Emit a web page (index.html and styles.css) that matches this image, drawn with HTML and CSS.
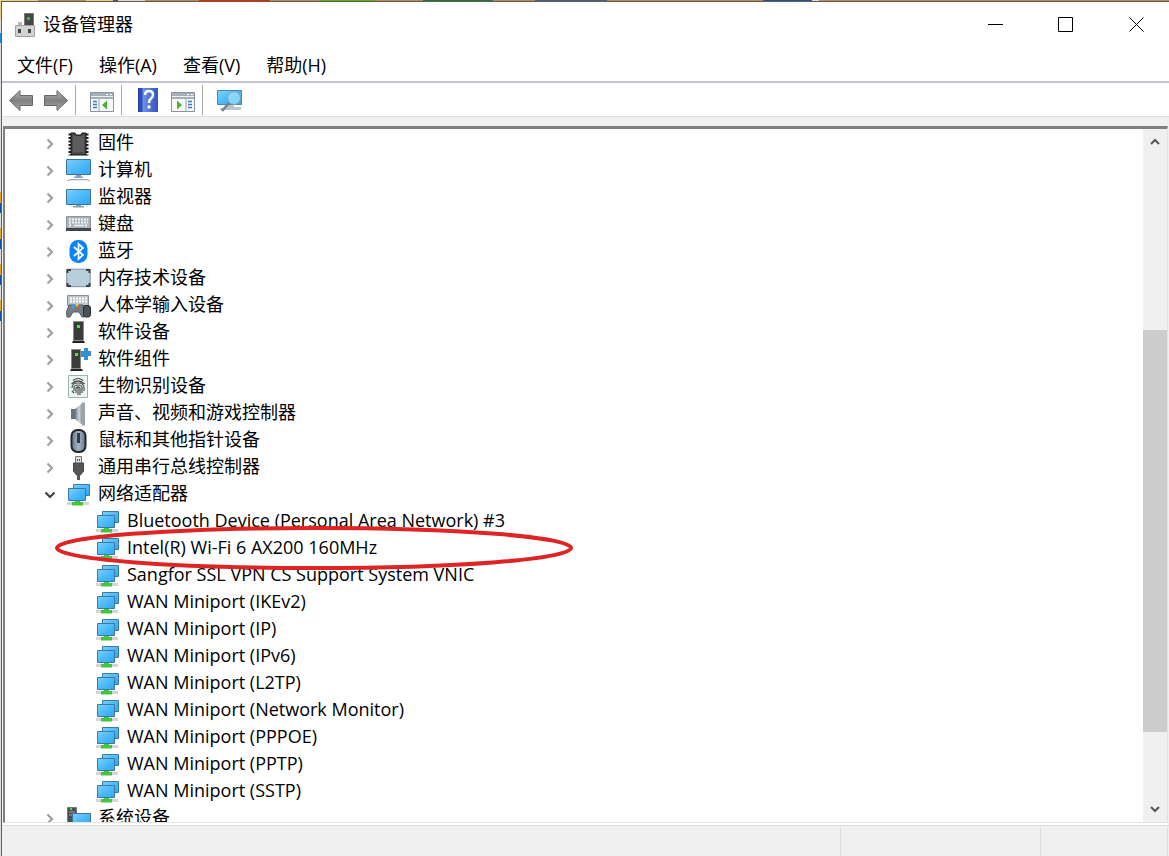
FILE: index.html
```html
<!DOCTYPE html>
<html lang="zh-CN">
<head>
    <meta charset="UTF-8">
    <meta name="viewport" content="width=device-width, initial-scale=1.0">
    <title>设备管理器</title>
    <link rel="stylesheet" href="styles.css">
</head>
<body>
    <!-- Icon set -->
    <svg class="icon-defs" aria-hidden="true">
        <defs>
            <linearGradient id="screen" x1="0" y1="0" x2="1" y2="1">
                <stop offset="0" stop-color="#7fd0fb"/>
                <stop offset="0.5" stop-color="#4dbaf9"/>
                <stop offset="1" stop-color="#2fa6f4"/>
            </linearGradient>
            <linearGradient id="arrow" x1="0" y1="0" x2="0" y2="1">
                <stop offset="0" stop-color="#b4b4b4"/>
                <stop offset="0.5" stop-color="#808080"/>
                <stop offset="1" stop-color="#a8a8a8"/>
            </linearGradient>
            <linearGradient id="steel" x1="0" y1="0" x2="1" y2="0">
                <stop offset="0" stop-color="#697580"/>
                <stop offset="0.5" stop-color="#cdd5dc"/>
                <stop offset="1" stop-color="#7d8790"/>
            </linearGradient>
            <linearGradient id="mouse" x1="0" y1="0" x2="1" y2="0">
                <stop offset="0" stop-color="#66798c"/>
                <stop offset="0.5" stop-color="#a3b4c5"/>
                <stop offset="1" stop-color="#66798c"/>
            </linearGradient>
            <linearGradient id="help" x1="0" y1="0" x2="1" y2="0">
                <stop offset="0" stop-color="#2445ad"/>
                <stop offset="0.2" stop-color="#2c50bd"/>
                <stop offset="0.25" stop-color="#6f90ea"/>
                <stop offset="1" stop-color="#3153bd"/>
            </linearGradient>
        </defs>
        <symbol id="i-chevron" viewBox="0 0 12 12">
            <path d="M3.500 1.500L8 6l-4.500 4.500" fill="none" stroke="#a0a0a0" stroke-width="2.200"/>
        </symbol>
        <symbol id="i-down" viewBox="0 0 12 12">
            <path d="M1.500 3.500l4.500 4.500 4.500-4.500" fill="none" stroke="#404040" stroke-width="2.200"/>
        </symbol>
        <symbol id="i-firmware" viewBox="0 0 25 24">
            <path d="M4 1.500v22M21 1.500v22" stroke="#222" stroke-width="3" stroke-dasharray="2 1.500"/>
            <path d="M5 1h4l1 2h5l1-2h4v22H5z" fill="#4b4b4b" stroke="#111"/>
            <path d="M7 4h11v16H7z" fill="#5c5c5c"/>
        </symbol>
        <symbol id="i-computer" viewBox="0 0 25 24">
            <path d="M.5.5h24v15H.5z" fill="url(#screen)" stroke="#3a7499"/>
            <path d="M10 16h5v1.500h2V19H8v-1.500h2z" fill="#8ba0ad"/>
            <path d="M1 22l3-1.500h17L24 22" fill="#e5eaee" stroke="#9eabb8"/>
        </symbol>
        <symbol id="i-monitor" viewBox="0 0 25 24">
            <path d="M.5 3.500h24v15H.5z" fill="url(#screen)" stroke="#3a7499"/>
            <path d="M10 19h5v1h3v1.500H7V20h3z" fill="#8ba0ad"/>
        </symbol>
        <symbol id="i-keyboard" viewBox="0 0 25 24">
            <path d="M.5 3.500h24v12H.5z" fill="#adb4bb" stroke="#8a929a"/>
            <path d="M0 15h25v3H0z" fill="#3f464d"/>
            <path d="M3 6.500h19M3 9.500h19M3 12.500h3M19 12.500h3" stroke="#f2f5f7" stroke-width="2" stroke-dasharray="2 1"/>
            <path d="M8 12.500h10" stroke="#f2f5f7" stroke-width="1.500"/>
        </symbol>
        <symbol id="i-bluetooth" viewBox="0 0 25 24">
            <rect x="3.500" y="0" width="18" height="23" rx="8.500" fill="#0a84fa"/>
            <path d="M8 7l9 8-4.500 4V4l4.500 4-9 8" fill="none" stroke="#fff" stroke-width="1.700"/>
        </symbol>
        <symbol id="i-memory" viewBox="0 0 25 24">
            <rect x=".7" y="2.200" width="23.500" height="17.500" rx="1.500" fill="#b9cedb" stroke="#83919c"/>
            <path d="M1.500 6V3H5M20 3h3.500v3M23.500 16v3H20M5 19H1.500v-3" fill="none" stroke="#3c4248" stroke-width="2"/>
        </symbol>
        <symbol id="i-hid" viewBox="0 0 25 24">
            <path d="M1.500 1.500h21v10h-21z" fill="#c0c5ca" stroke="#8a9197"/>
            <path d="M4 4.500h17M4 7.500h17" stroke="#fff" stroke-width="2" stroke-dasharray="2 1"/>
            <path d="M3 11h14l2 7-1 5h-2l-3-5H7l-3 5H1l-.5-5z" fill="#747c84" stroke="#555d64"/>
            <circle cx="7" cy="12.500" r="2" fill="#35a1eb"/>
            <circle cx="12" cy="14" r="1.500" fill="#e34f3d"/>
            <circle cx="11" cy="11" r="1.500" fill="#f3c83d"/>
            <rect x="17.500" y="11.500" width="7" height="11.500" rx="2.500" fill="#4b5258" stroke="#25292c"/>
        </symbol>
        <symbol id="i-device" viewBox="0 0 25 24">
            <path d="M7.500.5h10v19h-10z" fill="#3b3b3b" stroke="#8b8b8b"/>
            <path d="M7 20h11l1 2H6z" fill="#222"/>
            <path d="M11 4h3v3h-3z" fill="#43ea35"/>
        </symbol>
        <symbol id="i-component" viewBox="0 0 25 24">
            <path d="M14 3h4V0h4v3h3v5h-3v4h-4V9h-4z" fill="#338fd3"/>
            <path d="M5.500 1.500h9v19h-9z" fill="#3b3b3b" stroke="#8b8b8b"/>
            <path d="M5 21h11l1 2H4z" fill="#222"/>
            <path d="M9 5h3v3H9z" fill="#43ea35"/>
        </symbol>
        <symbol id="i-finger" viewBox="0 0 25 24">
            <path d="M2.500.5h19v22h-19z" fill="#eef4f2" stroke="#97b5ab"/>
            <g fill="none" stroke="#44504d" stroke-width="1.200">
                <path d="M7 5.500q5-4 10 0M5.500 9q6.500-6 13 0M6 13q0-5 6-5t6 5v3M8 16v-3q0-3 4-3t4 3v5M10 18v-5q2-2 4 0v7M12 13v7M6 16l2 2"/>
            </g>
        </symbol>
        <symbol id="i-sound" viewBox="0 0 25 24">
            <path d="M5 7h4v10H5z" fill="#66727d"/>
            <path d="M9 7l8-6.500v23L9 17z" fill="url(#steel)"/>
            <path d="M16 .5h3v23h-3z" fill="#9aa3ab"/>
        </symbol>
        <symbol id="i-mouse" viewBox="0 0 25 24">
            <rect x="5.500" y="1" width="14" height="22" rx="6" fill="url(#mouse)" stroke="#20262c" stroke-width="2"/>
            <path d="M12.500 4v10" stroke="#343c45" stroke-width="3"/>
        </symbol>
        <symbol id="i-usb" viewBox="0 0 25 24">
            <path d="M9.500.5h6v7h-6z" fill="#dedede" stroke="#777"/>
            <path d="M11 3h1v2h-1zM13 3h1v2h-1z" fill="#555"/>
            <path d="M7.500 7h10v8l-3 4h-4l-3-4z" fill="#555" stroke="#444"/>
            <path d="M11 18h3v6h-3z" fill="#555"/>
        </symbol>
        <symbol id="i-network" viewBox="0 0 25 24">
            <path d="M7.500 1.500h16v11h-16z" fill="url(#screen)" stroke="#3a7ba5"/>
            <path d="M2.500 5.500h17v12h-17z" fill="url(#screen)" stroke="#3a7ba5"/>
            <path d="M1 19h22v3H1z" fill="#d5d5d5"/>
            <path d="M9 18h5v1h3v3.500H6V19h3z" fill="#45c63a"/>
        </symbol>
        <symbol id="i-system" viewBox="0 0 25 24">
            <path d="M1.500.5h9v19h-9z" fill="#4a4f53" stroke="#777"/>
            <path d="M3 5h6M3 8h4" stroke="#9ea4a8"/>
            <path d="M4 1h2v2H4z" fill="#43ea35"/>
            <path d="M6.500 6.500h18v13h-18z" fill="url(#screen)" stroke="#3a7499"/>
        </symbol>
    </svg>

    <div class="window">
        <header class="titlebar">
            <svg class="app-icon" viewBox="0 0 20 24" aria-hidden="true">
                <path d="M9.500.5h9v13h-9z" fill="#464646" stroke="#777"/>
                <path d="M12 4h3v3h-3z" fill="#3fb838"/>
                <path d="M3 9h4v4H3z" fill="#b6b6b6"/>
                <path d="M.5 12.500h19v11H.5z" fill="#d3d3d3" stroke="#a2a2a2"/>
                <path d="M3 16h3v4H3zM13 16h3v4h-3z" fill="#444"/>
            </svg>
            <h1>设备管理器</h1>
            <div class="window-buttons">
                <button type="button" aria-label="最小化"><svg viewBox="0 0 16 16"><path d="M0 7.500h15" stroke="#000"/></svg></button>
                <button type="button" aria-label="最大化"><svg viewBox="0 0 16 16"><path d="M.5.5h14v14H.5z" fill="none" stroke="#000"/></svg></button>
                <button type="button" aria-label="关闭"><svg viewBox="0 0 16 16"><path d="M1.500.5l14 14M15.500.5l-14 14" stroke="#000"/></svg></button>
            </div>
        </header>

        <nav class="menubar">
            <button type="button">文件(F)</button>
            <button type="button">操作(A)</button>
            <button type="button">查看(V)</button>
            <button type="button">帮助(H)</button>
        </nav>

        <div class="toolbar">
            <button type="button" aria-label="后退"><svg viewBox="0 0 26 24"><path d="M1.500 12.500L12 2.500V7.500h12.500v10H12v5z" fill="url(#arrow)" stroke="#666"/></svg></button>
            <button type="button" aria-label="前进"><svg viewBox="0 0 26 24"><path d="M24.500 12.500L14 2.500V7.500H1.500v10H14v5z" fill="url(#arrow)" stroke="#666"/></svg></button>
            <span class="divider"></span>
            <button type="button" aria-label="显示控制台树">
                <svg viewBox="0 0 26 24">
                    <path d="M1.500 4.500h23v19h-23z" fill="#f6f8fa" stroke="#8a949e"/>
                    <path d="M2 5h22v6H2z" fill="#a4afb9"/>
                    <path d="M2 8.500h22" stroke="#eef1f4"/>
                    <path d="M17 6.500h2M21 6.500h2" stroke="#fff"/>
                    <path d="M10 11v12" stroke="#9aa5af"/>
                    <path d="M4 13.500h4M4 16.500h4M4 19.500h4" stroke="#3b7bbb" stroke-width="1.500"/>
                    <path d="M18 12.500v9L13 17z" fill="#46b52d"/>
                </svg>
            </button>
            <span class="divider"></span>
            <button type="button" aria-label="帮助">
                <svg viewBox="0 0 26 24">
                    <path d="M3 0h20v24H3z" fill="url(#help)"/>
                    <path d="M10 7q0-4 4-4t4 4q0 2-2 3.500t-2 4.500" fill="none" stroke="#fff" stroke-width="2.500"/>
                    <circle cx="14" cy="19" r="1.700" fill="#fff"/>
                </svg>
            </button>
            <button type="button" aria-label="显示操作窗格">
                <svg viewBox="0 0 26 24">
                    <path d="M1.500 4.500h23v19h-23z" fill="#f6f8fa" stroke="#8a949e"/>
                    <path d="M2 5h22v6H2z" fill="#a4afb9"/>
                    <path d="M2 8.500h22" stroke="#eef1f4"/>
                    <path d="M17 6.500h2M21 6.500h2" stroke="#fff"/>
                    <path d="M16 11v12" stroke="#9aa5af"/>
                    <path d="M18 13.500h4M18 16.500h4M18 19.500h4" stroke="#3b7bbb" stroke-width="1.500"/>
                    <path d="M7 12.500v9l5-4.500z" fill="#46b52d"/>
                </svg>
            </button>
            <span class="divider"></span>
            <button type="button" aria-label="扫描检测硬件改动">
                <svg viewBox="0 0 26 24">
                    <path d="M1.500 2.500h24v14h-24z" fill="url(#screen)" stroke="#4189b5"/>
                    <path d="M10 17h8v2h7v3H4v-2h6z" fill="#b9c4cd"/>
                    <circle cx="18" cy="10" r="6.500" fill="#9bdcfb" fill-opacity=".8" stroke="#7b9fb3"/>
                    <path d="M13 15l-7 8" stroke="#76828b" stroke-width="2.500"/>
                </svg>
            </button>
        </div>

        <main class="panel">
            <ul class="tree">
                <li><div class="row"><button type="button" aria-label="展开"><svg><use href="#i-chevron"/></svg></button><svg class="icon"><use href="#i-firmware"/></svg>固件</div></li>
                <li><div class="row"><button type="button" aria-label="展开"><svg><use href="#i-chevron"/></svg></button><svg class="icon"><use href="#i-computer"/></svg>计算机</div></li>
                <li><div class="row"><button type="button" aria-label="展开"><svg><use href="#i-chevron"/></svg></button><svg class="icon"><use href="#i-monitor"/></svg>监视器</div></li>
                <li><div class="row"><button type="button" aria-label="展开"><svg><use href="#i-chevron"/></svg></button><svg class="icon"><use href="#i-keyboard"/></svg>键盘</div></li>
                <li><div class="row"><button type="button" aria-label="展开"><svg><use href="#i-chevron"/></svg></button><svg class="icon"><use href="#i-bluetooth"/></svg>蓝牙</div></li>
                <li><div class="row"><button type="button" aria-label="展开"><svg><use href="#i-chevron"/></svg></button><svg class="icon"><use href="#i-memory"/></svg>内存技术设备</div></li>
                <li><div class="row"><button type="button" aria-label="展开"><svg><use href="#i-chevron"/></svg></button><svg class="icon"><use href="#i-hid"/></svg>人体学输入设备</div></li>
                <li><div class="row"><button type="button" aria-label="展开"><svg><use href="#i-chevron"/></svg></button><svg class="icon"><use href="#i-device"/></svg>软件设备</div></li>
                <li><div class="row"><button type="button" aria-label="展开"><svg><use href="#i-chevron"/></svg></button><svg class="icon"><use href="#i-component"/></svg>软件组件</div></li>
                <li><div class="row"><button type="button" aria-label="展开"><svg><use href="#i-chevron"/></svg></button><svg class="icon"><use href="#i-finger"/></svg>生物识别设备</div></li>
                <li><div class="row"><button type="button" aria-label="展开"><svg><use href="#i-chevron"/></svg></button><svg class="icon"><use href="#i-sound"/></svg>声音、视频和游戏控制器</div></li>
                <li><div class="row"><button type="button" aria-label="展开"><svg><use href="#i-chevron"/></svg></button><svg class="icon"><use href="#i-mouse"/></svg>鼠标和其他指针设备</div></li>
                <li><div class="row"><button type="button" aria-label="展开"><svg><use href="#i-chevron"/></svg></button><svg class="icon"><use href="#i-usb"/></svg>通用串行总线控制器</div></li>
                <li>
                    <div class="row"><button type="button" aria-label="折叠"><svg><use href="#i-down"/></svg></button><svg class="icon"><use href="#i-network"/></svg>网络适配器</div>
                    <ul class="children">
                        <li class="row"><svg class="icon"><use href="#i-network"/></svg>Bluetooth Device (Personal Area Network) #3</li>
                        <li class="row marked"><svg class="icon"><use href="#i-network"/></svg>Intel(R) Wi-Fi 6 AX200 160MHz
                            <svg class="mark" viewBox="0 0 518 44" aria-hidden="true"><ellipse cx="259" cy="22" rx="257" ry="20" fill="none" stroke="#df2424" stroke-width="4"/></svg>
                        </li>
                        <li class="row"><svg class="icon"><use href="#i-network"/></svg>Sangfor SSL VPN CS Support System VNIC</li>
                        <li class="row"><svg class="icon"><use href="#i-network"/></svg>WAN Miniport (IKEv2)</li>
                        <li class="row"><svg class="icon"><use href="#i-network"/></svg>WAN Miniport (IP)</li>
                        <li class="row"><svg class="icon"><use href="#i-network"/></svg>WAN Miniport (IPv6)</li>
                        <li class="row"><svg class="icon"><use href="#i-network"/></svg>WAN Miniport (L2TP)</li>
                        <li class="row"><svg class="icon"><use href="#i-network"/></svg>WAN Miniport (Network Monitor)</li>
                        <li class="row"><svg class="icon"><use href="#i-network"/></svg>WAN Miniport (PPPOE)</li>
                        <li class="row"><svg class="icon"><use href="#i-network"/></svg>WAN Miniport (PPTP)</li>
                        <li class="row"><svg class="icon"><use href="#i-network"/></svg>WAN Miniport (SSTP)</li>
                    </ul>
                </li>
                <li><div class="row"><button type="button" aria-label="展开"><svg><use href="#i-chevron"/></svg></button><svg class="icon"><use href="#i-system"/></svg>系统设备</div></li>
            </ul>
            <div class="scrollbar">
                <button type="button" aria-label="向上滚动"><svg viewBox="0 0 12 12"><path d="M2 8l4-4 4 4" fill="none" stroke="#555" stroke-width="2"/></svg></button>
                <div class="track"><div class="thumb"></div></div>
                <button type="button" aria-label="向下滚动"><svg viewBox="0 0 12 12"><path d="M2 4l4 4 4-4" fill="none" stroke="#555" stroke-width="2"/></svg></button>
            </div>
        </main>

        <footer class="statusbar">
            <span></span>
            <span></span>
            <span></span>
        </footer>
    </div>
</body>
</html>
```
FILE: styles.css
```css
* {
    box-sizing: border-box;
}
body {
    margin: 0;
    height: 100vh;
    padding: 1px 0 0 1px;
    overflow: hidden;
    font-family: "Open Sans", "Noto Sans CJK SC", sans-serif;
    font-size: 18px;
    color: #000;
    /* slivers of the desktop behind the window */
    background:
        linear-gradient(90deg, #e8cf8c 0 38px, #b38d63 38px 86px, #e8cf8c 86px 113px, #2c5a9c 113px 118px, #d8d8d8 118px 145px, #b38d63 145px 199px, #d92a10 199px 270px, #b38d63 270px 319px, #5cae1c 319px 376px, #b38d63 376px 423px, #107c41 423px 493px, #b38d63 493px 535px, #3f5f9c 535px 607px, #b38d63 607px 763px, #1c55a5 763px 812px, #ddd 812px 819px, #b38d63 819px) 0 0 / 100% 1px no-repeat,
        linear-gradient(#e8cf8c 0 20px, #ddd 20px 33px, #1d84d8 33px 43px, #ddd 43px 192px, #e3a32b 192px 203px, #0b52a8 203px 213px, #ddd 213px 228px, #e3a32b 228px 239px, #0b52a8 239px 249px, #ddd 249px 264px, #e3a32b 264px 275px, #0b52a8 275px 285px, #ddd 285px 300px, #e3a32b 300px 311px, #0b52a8 311px 321px, #ddd 321px) 0 0 / 1px 100% no-repeat;
}
button {
    padding: 0;
    border: 0;
    background: none;
    font: inherit;
    color: inherit;
}
ul {
    margin: 0;
    padding: 0;
    list-style: none;
}
svg {
    display: block;
}
.icon-defs {
    position: absolute;
    width: 0;
    height: 0;
}
.window {
    display: flex;
    flex-direction: column;
    height: 100%;
    border-top: 1px solid #6e5a44;
    border-left: 1px solid #606060;
    background: #f0f0f0;
}

/* Title and menu */
.titlebar {
    display: flex;
    align-items: center;
    height: 45px;
    padding-left: 13px;
    background: #fff;
}
.app-icon {
    width: 20px;
    height: 24px;
    margin-right: 8px;
}
.titlebar h1 {
    margin: 0;
    padding-bottom: 4px;
    font-size: 18px;
    font-weight: normal;
}
.window-buttons {
    display: flex;
    gap: 4px;
    margin-left: auto;
}
.window-buttons button {
    display: grid;
    place-items: center;
    width: 66px;
    height: 44px;
}
.window-buttons svg {
    width: 16px;
    height: 16px;
}
.menubar {
    display: flex;
    gap: 26px;
    height: 36px;
    padding-left: 15px;
    border-bottom: 2px solid #c4c4cc;
    background: #fff;
}

/* Toolbar */
.toolbar {
    display: flex;
    align-items: center;
    gap: 9px;
    height: 34px;
    padding: 1px 0 0 6px;
    border-bottom: 1px solid #e0e0e0;
    background: #fff;
}
.toolbar svg {
    width: 26px;
    height: 24px;
}
.divider {
    width: 1px;
    height: 30px;
    margin: 0 4px 0 -3px;
    background: #a8a8a8;
}

/* Device tree */
.panel {
    display: flex;
    flex: 1;
    min-height: 0;
    margin: 9px 1px 0 1px;
    overflow: hidden;
    border: 2px solid #808080;
    border-top-width: 3px;
    border-right: 1px solid #e3e3e3;
    border-bottom: 1px solid #e3e3e3;
    background: #fff;
    box-shadow: 0 2px 0 #fff;
}
.tree {
    flex: 1;
    padding-top: 1px;
}
.row {
    display: flex;
    align-items: flex-start;
    height: 27px;
    padding-left: 39px;
    line-height: 25px;
    white-space: nowrap;
}
.row button,
.row .icon {
    align-self: center;
}
.row button {
    margin-right: 10px;
}
.row button svg {
    width: 12px;
    height: 12px;
}
.row .icon {
    width: 25px;
    height: 24px;
    margin-right: 7px;
}
.children .row {
    padding-left: 90px;
}
.marked {
    position: relative;
}
.mark {
    position: absolute;
    left: 50px;
    top: -9px;
    width: 518px;
    height: 44px;
}

/* Scrollbar */
.scrollbar {
    display: flex;
    flex-direction: column;
    width: 24px;
    background: #f0f0f0;
}
.scrollbar button {
    display: grid;
    place-items: center;
    height: 26px;
}
.scrollbar svg {
    width: 12px;
    height: 12px;
}
.track {
    display: flex;
    flex: 1;
    flex-direction: column;
}
.track::before {
    content: "";
    flex: 175;
}
.track::after {
    content: "";
    flex: 64;
}
.thumb {
    flex: 402;
    background: #cdcdcd;
}

/* Status bar */
.statusbar {
    display: flex;
    height: 31px;
    margin-top: 2px;
    padding: 2px 1px 0 0;
    border-top: 1px solid #dcdcdc;
}
.statusbar span {
    width: 200px;
    border-right: 1px solid #dcdcdc;
}
.statusbar span:first-child {
    flex: 1;
}
.statusbar span:last-child {
    width: 127px;
}
```
